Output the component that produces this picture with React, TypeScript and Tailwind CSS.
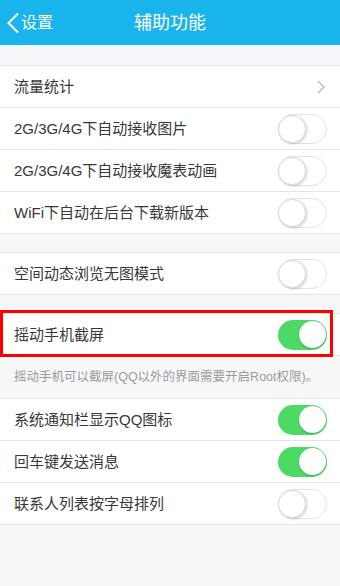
import React from 'react';

const font = { fontFamily: '"Liberation Sans", "Noto Sans CJK SC", sans-serif' };

const Toggle = ({ on }: { on: boolean }) =>
  on ? (
    <div className="w-[49px] h-[30px] rounded-full bg-[#4cd964] flex items-center justify-end pr-[1.5px]">
      <div className="w-[27px] h-[27px] rounded-full bg-white shadow-[0_1px_2px_rgba(0,0,0,0.2)]" />
    </div>
  ) : (
    <div className="w-[49px] h-[30px] rounded-full bg-white border-[1.5px] border-[#e3e3e3] flex items-center">
      <div className="w-[28px] h-[28px] -ml-[1px] rounded-full bg-white border border-[#dcdcdc] shadow-[1px_1px_3px_rgba(0,0,0,0.18)]" />
    </div>
  );

const Row = ({ label, on, arrow }: { label: string; on?: boolean; arrow?: boolean }) => (
  <div className="h-[42px] border-t border-[#e4e4e4] flex items-center justify-between pl-[14px] pr-[13px] bg-white">
    <span className="text-[15px] text-[#383838] leading-none">{label}</span>
    {arrow ? (
      <svg width="10" height="16" viewBox="0 0 10 16" className="mr-[1px]">
        <polyline points="2,2 8,8 2,14" fill="none" stroke="#b8b8b8" strokeWidth="1.3" />
      </svg>
    ) : (
      <Toggle on={!!on} />
    )}
  </div>
);

const Section = ({ children }: { children: React.ReactNode }) => (
  <div className="border-b border-[#e4e4e4] bg-white">{children}</div>
);

export default function App() {
  return (
    <div className="w-[340px] h-[586px] bg-[#f6f7f9] overflow-hidden" style={font}>
      <div className="h-[45px] bg-[#19b4ec] relative flex items-center justify-center">
        <div className="absolute left-[6px] top-0 h-full flex items-center">
          <svg width="14" height="22" viewBox="0 0 14 22">
            <polyline points="12,1.5 2.5,11 12,20.5" fill="none" stroke="#ffffff" strokeWidth="2" />
          </svg>
          <span className="text-white text-[16px] ml-[1px] leading-none">设置</span>
        </div>
        <span className="text-white text-[18px] leading-none">辅助功能</span>
      </div>

      <div className="h-[20px]" />
      <Section>
        <Row label="流量统计" arrow />
        <Row label="2G/3G/4G下自动接收图片" />
        <Row label="2G/3G/4G下自动接收魔表动画" />
        <Row label="WiFi下自动在后台下载新版本" />
      </Section>

      <div className="h-[18px]" />
      <Section>
        <Row label="空间动态浏览无图模式" />
      </Section>

      <div className="h-[18px]" />
      <div className="relative">
        <Section>
          <Row label="摇动手机截屏" on />
        </Section>
        <div className="absolute left-0 top-[-3px] w-[333px] h-[47px] border-[3px] border-[#ff0000]" />
      </div>

      <div className="h-[42px] flex items-center pl-[14px]">
        <span className="text-[12.5px] text-[#9a9a9a] leading-none">摇动手机可以截屏(QQ以外的界面需要开启Root权限)。</span>
      </div>

      <Section>
        <Row label="系统通知栏显示QQ图标" on />
        <Row label="回车键发送消息" on />
        <Row label="联系人列表按字母排列" />
      </Section>
    </div>
  );
}
